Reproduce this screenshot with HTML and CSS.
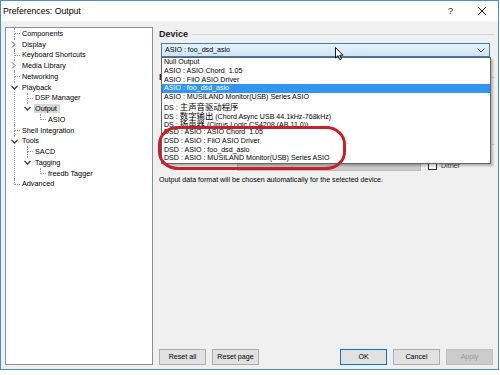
FILE: index.html
```html
<!DOCTYPE html>
<html lang="en">
<head>
  <meta charset="UTF-8" />
  <meta name="viewport" content="width=device-width, initial-scale=1.0"/>
  <title>Preferences: Output</title>
  <link rel="stylesheet" href="styles.css">
</head>
<body>
  <div class="window">
    <div class="titlebar">
      <span class="title">Preferences: Output</span>
      <span class="tb-btn help">?</span>
      <span class="tb-btn close">
        <svg width="10" height="10" viewBox="0 0 10 10"><path d="M1 1L9 9M9 1L1 9" stroke="#111" stroke-width="1"/></svg>
      </span>
    </div>

    <div class="main">
      <!-- page tree -->
      <div class="tree">
        <ul class="root">
          <li><div class="row"><span class="label">Components</span></div></li>
          <li><div class="row"><span class="twisty"><svg width="5" height="7" viewBox="0 0 5 7"><path d="M1 0.5L4 3.5L1 6.5" fill="none" stroke="#555" stroke-width="1"/></svg></span><span class="label">Display</span></div></li>
          <li><div class="row"><span class="label">Keyboard Shortcuts</span></div></li>
          <li><div class="row"><span class="twisty"><svg width="5" height="7" viewBox="0 0 5 7"><path d="M1 0.5L4 3.5L1 6.5" fill="none" stroke="#555" stroke-width="1"/></svg></span><span class="label">Media Library</span></div></li>
          <li><div class="row"><span class="label">Networking</span></div></li>
          <li>
            <div class="row"><span class="twisty"><svg width="7" height="5" viewBox="0 0 7 5"><path d="M0.5 0.8L3.5 4L6.5 0.8" fill="none" stroke="#333" stroke-width="1.2"/></svg></span><span class="label">Playback</span></div>
            <ul>
              <li><div class="row"><span class="label">DSP Manager</span></div></li>
              <li>
                <div class="row"><span class="twisty"><svg width="7" height="5" viewBox="0 0 7 5"><path d="M0.5 0.8L3.5 4L6.5 0.8" fill="none" stroke="#333" stroke-width="1.2"/></svg></span><span class="label sel">Output</span></div>
                <ul>
                  <li><div class="row"><span class="label">ASIO</span></div></li>
                </ul>
              </li>
            </ul>
          </li>
          <li><div class="row"><span class="label">Shell Integration</span></div></li>
          <li>
            <div class="row"><span class="twisty"><svg width="7" height="5" viewBox="0 0 7 5"><path d="M0.5 0.8L3.5 4L6.5 0.8" fill="none" stroke="#333" stroke-width="1.2"/></svg></span><span class="label">Tools</span></div>
            <ul>
              <li><div class="row"><span class="label">SACD</span></div></li>
              <li>
                <div class="row"><span class="twisty"><svg width="7" height="5" viewBox="0 0 7 5"><path d="M0.5 0.8L3.5 4L6.5 0.8" fill="none" stroke="#333" stroke-width="1.2"/></svg></span><span class="label">Tagging</span></div>
                <ul>
                  <li><div class="row"><span class="label">freedb Tagger</span></div></li>
                </ul>
              </li>
            </ul>
          </li>
          <li><div class="row"><span class="label">Advanced</span></div></li>
        </ul>
      </div>

      <!-- output page -->
      <div class="page">
        <div class="group-head">Device</div>

        <div class="combo-wrap">
          <div class="combo">
            <span>ASIO : foo_dsd_asio</span>
            <svg width="8" height="5" viewBox="0 0 8 5"><path d="M0.5 0.5L4 4L7.5 0.5" fill="none" stroke="#444" stroke-width="1"/></svg>
          </div>
          <ul class="droplist">
            <li>Null Output</li>
            <li>ASIO : ASIO Chord&nbsp; 1.05</li>
            <li>ASIO : FiiO ASIO Driver</li>
            <li class="active">ASIO : foo_dsd_asio</li>
            <li>ASIO : MUSILAND Monitor(USB) Series ASIO</li>
            <li>DS : <span class="cjk">主声音驱动程序</span></li>
            <li>DS : <span class="cjk">数字输出</span> (Chord Async USB 44.1kHz-768kHz)</li>
            <li>DS : <span class="cjk">扬声器</span> (Cirrus Logic CS4208 (AB 11.0))</li>
            <li>DSD : ASIO : ASIO Chord&nbsp; 1.05</li>
            <li>DSD : ASIO : FiiO ASIO Driver</li>
            <li>DSD : ASIO : foo_dsd_asio</li>
            <li>DSD : ASIO : MUSILAND Monitor(USB) Series ASIO</li>
          </ul>
        </div>

        <div class="group-head buffer">B</div>
        <div class="slider-space"></div>

        <div class="group-head">O</div>
        <div class="format-row">
          <div class="combo disabled"></div>
          <label class="check"><span class="box"></span>Dither</label>
        </div>
        <p class="note">Output data format will be chosen automatically for the selected device.</p>

        <div class="buttons">
          <button>Reset all</button>
          <button>Reset page</button>
          <span class="spacer"></span>
          <button class="default">OK</button>
          <button>Cancel</button>
          <button class="off">Apply</button>
        </div>
      </div>
    </div>

    <!-- annotation + mouse pointer -->
    <div class="mark"></div>
    <svg class="pointer" width="9" height="14" viewBox="0 0 9 14">
      <path d="M0.5 0.5L0.5 11L3 8.6L4.8 12.8L6.4 12.1L4.7 8.2L8 8.2Z" fill="#fff" stroke="#000" stroke-width="0.9" stroke-linejoin="round"/>
    </svg>
  </div>
</body>
</html>
```

FILE: styles.css
```css
body {
  margin: 0;
  background: #ffffff;
  font-family: "Liberation Sans", Arial, sans-serif;
  color: #000;
}

.window {
  position: relative;
  width: 497px;
  height: 368px;
  border: 1px solid #4a8fc9;
  background: #f0f0f0;
  display: flex;
  flex-direction: column;
  overflow: hidden;
}

.titlebar {
  height: 21px;
  background: #ffffff;
  display: flex;
  align-items: center;
  font-size: 8.7px;
}

.title {
  flex: 1;
  padding-left: 2px;
}

.tb-btn {
  width: 31px;
  text-align: center;
  font-size: 9px;
  color: #222;
}

.tb-btn.close {
  display: flex;
  justify-content: center;
  margin-right: 1px;
}

.main {
  flex: 1;
  display: flex;
  padding: 6px 3px 4px 4px;
}

/* tree */
.tree {
  width: 146px;
  height: 336px;
  border: 1px solid #8a8f96;
  background: #ffffff;
  font-size: 7.25px;
}

.tree ul {
  list-style: none;
  margin: 0;
  padding: 0;
}

.tree ul.root {
  margin-left: 8px;
}

.tree ul ul {
  margin-left: 5px;
}

.tree li {
  position: relative;
  padding-left: 8px;
}

.tree li::before {
  content: '';
  position: absolute;
  left: 0;
  top: 0;
  width: 5px;
  height: 5px;
  border-left: 1px dotted #9a9a9a;
  border-bottom: 1px dotted #9a9a9a;
}

.tree li::after {
  content: '';
  position: absolute;
  left: 0;
  top: 5px;
  bottom: 0;
  border-left: 1px dotted #9a9a9a;
}

.tree li:last-child::after {
  display: none;
}

.row {
  position: relative;
  height: 10.75px;
  display: flex;
  align-items: center;
}

.twisty {
  position: absolute;
  left: -11px;
  top: 1px;
  width: 10px;
  height: 9px;
  padding-left: 0;
  background: #ffffff;
  display: flex;
  align-items: center;
  z-index: 1;
}

.label {
  line-height: 9px;
  white-space: nowrap;
}

.label.sel {
  background: #d9d9d9;
  margin-left: -2px;
  padding: 0 3px 0 2px;
}

/* page */
.page {
  flex: 1;
  margin-left: 6px;
  display: flex;
  flex-direction: column;
  font-size: 7.1px;
}

.group-head {
  height: 14px;
  display: flex;
  align-items: center;
  font-size: 9px;
  font-weight: bold;
  color: #1a1a1a;
}

.group-head::after {
  content: '';
  flex: 1;
  margin-left: 4px;
  border-top: 1px solid #d5d5d5;
}

.group-head.buffer {
  margin-top: 13px;
}

.combo-wrap {
  position: relative;
  margin: 2px 5px 0 2px;
}

.combo {
  height: 12px;
  border: 1px solid #3d7fb8;
  background: linear-gradient(#e6f1fb, #cfe4f6);
  display: flex;
  align-items: center;
  justify-content: space-between;
  padding: 0 4px 0 3px;
}

.droplist {
  position: absolute;
  top: 100%;
  left: 0;
  right: -1px;
  margin: 0;
  padding: 0;
  list-style: none;
  background: #ffffff;
  border: 1px solid #646464;
  box-shadow: 2px 2px 2px rgba(0, 0, 0, 0.25);
  z-index: 2;
}

.droplist li {
  height: 8.75px;
  line-height: 8.75px;
  padding-left: 2px;
  white-space: nowrap;
}

.droplist li.active {
  background: #3296f0;
  color: #ffffff;
}

.cjk {
  font-family: "Noto Sans CJK SC", sans-serif;
  font-size: 8.4px;
}

.slider-space {
  height: 53px;
}

.format-row {
  display: flex;
  align-items: center;
  margin-top: 9px;
}

.combo.disabled {
  width: 175px;
  height: 9px;
  margin-left: 78px;
  background: #cacaca;
  border-color: #bdbdbd;
}

.check {
  display: flex;
  align-items: center;
  margin-left: 7px;
  color: #444;
}

.check .box {
  width: 7px;
  height: 7px;
  border: 1px solid #333;
  background: #fff;
  margin-right: 4px;
}

.note {
  margin: 5px 0 0;
  line-height: 9px;
}

.buttons {
  margin-top: auto;
  display: flex;
  gap: 6px;
  padding-right: 2px;
}

.spacer {
  flex: 1;
}

button {
  width: 47px;
  height: 16px;
  padding: 0;
  font-family: inherit;
  font-size: 7.1px;
  color: #000;
  background: #e1e1e1;
  border: 1px solid #adadad;
}

button.default {
  border-color: #0078d7;
}

button.off {
  background: #cccccc;
  border-color: #bfbfbf;
  color: #9a9a9a;
}

/* red annotation drawn on the screenshot */
.mark {
  position: absolute;
  left: 157px;
  top: 125px;
  width: 182px;
  height: 38px;
  border: 3px solid #c4212b;
  border-radius: 20px / 18px;
  z-index: 3;
}

.pointer {
  position: absolute;
  left: 334px;
  top: 46px;
  z-index: 4;
}
```
